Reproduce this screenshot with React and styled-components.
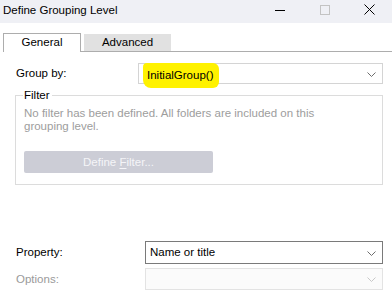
import React from "react";
import styled, { createGlobalStyle } from "styled-components";

const Global = createGlobalStyle`
  html, body {
    margin: 0;
    padding: 0;
    background: #ffffff;
  }
  body {
    font-family: "Liberation Sans", Arial, sans-serif;
    font-size: 11.5px;
    line-height: 15px;
    color: #000;
  }
`;

const Window = styled.div`
  width: 392px;
  height: 291px;
  background: #ffffff;
  display: flex;
  flex-direction: column;
  overflow: hidden;
`;

const TitleBar = styled.div`
  flex: none;
  height: 23px;
  background: #eff0f5;
  display: flex;
  align-items: center;
  padding-left: 3px;
`;

const Title = styled.div`
  flex: 1;
  color: #000;
  padding-bottom: 3px;
`;

const WinButton = styled.div`
  width: 45px;
  height: 23px;
  display: flex;
  align-items: center;
  justify-content: center;
  padding-bottom: 4px;
`;

const TabStrip = styled.div`
  flex: none;
  display: flex;
  align-items: flex-end;
  margin: 10px 0 0 3px;
  height: 18px;
  border-bottom: 1px solid #adadad;
`;

const Tab = styled.div`
  box-sizing: border-box;
  width: ${(p) => p.$w}px;
  height: ${(p) => (p.$active ? 19 : 17)}px;
  margin-bottom: ${(p) => (p.$active ? -1 : 0)}px;
  margin-right: ${(p) => (p.$active ? 3 : 0)}px;
  background: ${(p) => (p.$active ? "#ffffff" : "#e1e1e1")};
  border: 1px solid ${(p) => (p.$active ? "#adadad" : "#e1e1e1")};
  border-bottom: none;
  display: flex;
  align-items: center;
  justify-content: center;
  padding-bottom: 1px;
`;

const Body = styled.div`
  display: flex;
  flex-direction: column;
  padding: 0 9px 0 15px;
`;

const Row = styled.div`
  display: flex;
  align-items: center;
  margin-top: ${(p) => p.$top}px;
`;

const Label = styled.div`
  width: ${(p) => p.$w}px;
  padding-left: 1px;
  color: ${(p) => (p.$disabled ? "#9a9a9a" : "#000")};
`;

const Combo = styled.div`
  position: relative;
  box-sizing: border-box;
  flex: 1;
  height: ${(p) => p.$h}px;
  border: 1px solid ${(p) => p.$border};
  background: ${(p) => (p.$disabled ? "#fbfbfb" : "#ffffff")};
  display: flex;
  align-items: center;
  padding-left: ${(p) => p.$pl}px;
`;

const Highlight = styled.span`
  display: inline-block;
  background: #fff200;
  padding: 5px 6px 5px 4px;
  margin-left: -4px;
  margin-top: 3px;
  border-radius: 4px 6px 6px 8px;
`;

const Chevron = styled.svg`
  position: absolute;
  right: 6px;
  top: 50%;
  margin-top: -2px;
`;

const GroupBox = styled.fieldset`
  box-sizing: border-box;
  margin: 4px 0 0 0;
  padding: 0 8px;
  height: 97px;
  border: 1px solid #dcdcdc;
  min-width: 0;
`;

const Legend = styled.legend`
  padding: 0 2px 0 1px;
  margin-left: -1px;
  color: #000;
`;

const Note = styled.div`
  color: #9d9d9d;
  line-height: 13px;
  margin-top: 4px;
`;

const FilterButton = styled.div`
  width: 189px;
  height: 22px;
  margin-top: 18px;
  background: #cccdd6;
  border-radius: 2px;
  color: #f5f5f8;
  display: flex;
  align-items: center;
  justify-content: center;
  u {
    text-decoration-thickness: 1px;
    text-underline-offset: 2px;
  }
`;

const ChevronIcon = ({ color }) => (
  <Chevron width="9" height="5" viewBox="0 0 9 5">
    <path d="M0.5 0.5 L4.5 4.5 L8.5 0.5" fill="none" stroke={color} strokeWidth="1" />
  </Chevron>
);

export default function App() {
  return (
    <Window>
      <Global />
      <TitleBar>
        <Title>Define Grouping Level</Title>
        <WinButton>
          <svg width="12" height="10" viewBox="0 0 12 10">
            <line x1="1" y1="5.5" x2="11" y2="5.5" stroke="#000" strokeWidth="1" />
          </svg>
        </WinButton>
        <WinButton>
          <svg width="10" height="10" viewBox="0 0 10 10">
            <rect x="0.5" y="0.5" width="9" height="9" fill="none" stroke="#c3c3c3" strokeWidth="1" />
          </svg>
        </WinButton>
        <WinButton>
          <svg width="11" height="11" viewBox="0 0 11 11">
            <path d="M0.5 0.5 L10.5 10.5 M10.5 0.5 L0.5 10.5" stroke="#000" strokeWidth="1" />
          </svg>
        </WinButton>
      </TitleBar>

      <TabStrip>
        <Tab $active $w={78}>General</Tab>
        <Tab $w={87}>Advanced</Tab>
      </TabStrip>

      <Body>
        <Row $top={11}>
          <Label $w={122}>Group by:</Label>
          <Combo $h={21} $border="#d4d4d4" $pl={8}>
            <Highlight>InitialGroup()</Highlight>
            <ChevronIcon color="#6d6d6d" />
          </Combo>
        </Row>

        <GroupBox>
          <Legend>Filter</Legend>
          <Note>
            No filter has been defined. All folders are included on this
            <br />
            grouping level.
          </Note>
          <FilterButton>
            Define&nbsp;<u>F</u>ilter...
          </FilterButton>
        </GroupBox>

        <Row $top={56}>
          <Label $w={129}>Property:</Label>
          <Combo $h={23} $border="#7a7a7a" $pl={4}>
            Name or title
            <ChevronIcon color="#6d6d6d" />
          </Combo>
        </Row>

        <Row $top={4}>
          <Label $w={129} $disabled>Options:</Label>
          <Combo $h={22} $border="#e3e3e3" $pl={4} $disabled>
            <ChevronIcon color="#c8c8c8" />
          </Combo>
        </Row>
      </Body>
    </Window>
  );
}
